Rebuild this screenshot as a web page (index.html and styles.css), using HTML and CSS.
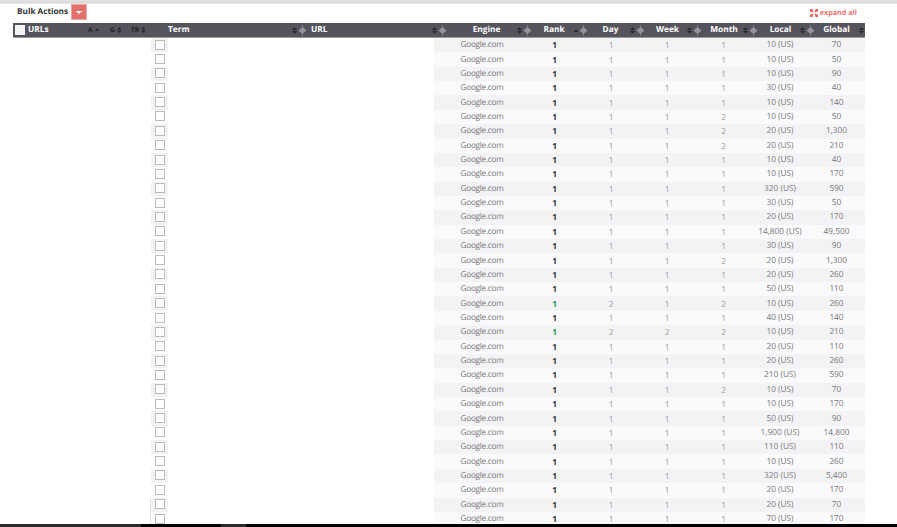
FILE: index.html
```html
<!DOCTYPE html>
<html lang="en">
<head>
<meta charset="utf-8">
<title>Bulk Actions</title>
<link rel="stylesheet" href="styles.css">
</head>
<body>
<svg class="defs" width="0" height="0" aria-hidden="true">
  <symbol id="sort" viewBox="0 0 6 8"><path d="M3 0 6 3.4H0ZM3 8 0 4.6H6Z"/></symbol>
  <symbol id="sep" viewBox="0 0 9 13"><path d="M4 1h1v11h-1z" opacity=".7"/><path d="M4.5 3 8.5 6.5 4.5 10 .5 6.5Z"/></symbol>
</svg>
<div class="page">
  <div class="topline"></div>
  <div class="toolbar">
    <span class="bulk">Bulk Actions</span>
    <button class="caret-btn" type="button" aria-label="Bulk actions menu"><span class="caret"></span></button>
    <a class="expand">
      <svg class="expand-icon" viewBox="0 0 8 8" width="8" height="8"><path d="M0 0h3L2.2 .8 3.6 2.6 2.6 3.6 .8 2.2 0 3ZM8 0v3L7.2 2.2 5.4 3.6 4.4 2.6 5.8 .8 5 0ZM0 8V5L.8 5.8 2.6 4.4 3.6 5.4 2.2 7.2 3 8ZM8 8H5L5.8 7.2 4.4 5.4 5.4 4.4 7.2 5.8 8 5Z"/></svg>
      expand all
    </a>
  </div>
  <div class="head">
    <div class="hcell urls">
      <span class="hbox"></span>
      <span class="urls-label">URLs</span>
      <span class="mini m-a">A<i class="up"></i></span>
      <span class="mini m-g">G<svg class="sort"><use href="#sort"/></svg></span>
      <span class="mini m-tr">TR<svg class="sort"><use href="#sort"/></svg></span>
    </div>
    <div class="hcell left term"><span class="label">Term</span><svg class="sort"><use href="#sort"/></svg></div>
    <div class="hcell left url"><svg class="sep"><use href="#sep"/></svg><span class="label">URL</span><svg class="sort"><use href="#sort"/></svg></div>
    <div class="hcell engine"><svg class="sep"><use href="#sep"/></svg><span class="label">Engine</span><svg class="sort"><use href="#sort"/></svg></div>
    <div class="hcell"><svg class="sep"><use href="#sep"/></svg><span class="label">Rank</span><i class="up"></i></div>
    <div class="hcell"><svg class="sep"><use href="#sep"/></svg><span class="label">Day</span><svg class="sort"><use href="#sort"/></svg></div>
    <div class="hcell"><svg class="sep"><use href="#sep"/></svg><span class="label">Week</span><svg class="sort"><use href="#sort"/></svg></div>
    <div class="hcell"><svg class="sep"><use href="#sep"/></svg><span class="label">Month</span><svg class="sort"><use href="#sort"/></svg></div>
    <div class="hcell"><svg class="sep"><use href="#sep"/></svg><span class="label">Local</span><svg class="sort"><use href="#sort"/></svg></div>
    <div class="hcell global"><svg class="sep"><use href="#sep"/></svg><span class="label">Global</span><svg class="sort"><use href="#sort"/></svg></div>
  </div>
  <div class="body" id="rows"></div>
  <div class="footer"><span class="f1"></span><span class="f2"></span><span class="f3"></span><span class="f4"></span></div>
</div>
<script src="rows.js"></script>
</body>
</html>
```
FILE: rows.js
```js
var data = [
  [1,1,1,"10",70],[1,1,1,"10",50],[1,1,1,"10",90],[1,1,1,"30",40],[1,1,1,"10",140],
  [1,1,2,"10",50],[1,1,2,"20","1,300"],[1,1,2,"20",210],[1,1,1,"10",40],[1,1,1,"10",170],
  [1,1,1,"320",590],[1,1,1,"30",50],[1,1,1,"20",170],[1,1,1,"14,800","49,500"],[1,1,1,"30",90],
  [1,1,2,"20","1,300"],[1,1,1,"20",260],[1,1,1,"50",110],[2,1,2,"10",260],[1,1,1,"40",140],
  [2,2,2,"10",210],[1,1,1,"20",110],[1,1,1,"20",260],[1,1,1,"210",590],[1,1,2,"10",70],
  [1,1,1,"10",170],[1,1,1,"50",90],[1,1,1,"1,900","14,800"],[1,1,1,"110",110],[1,1,1,"10",260],
  [1,1,1,"320","5,400"],[1,1,1,"20",170],[1,1,1,"20",70],[1,1,1,"70",170]
];
document.getElementById("rows").innerHTML = data.map(function (r, i) {
  var up = r[0] === 2;
  return '<div class="row' + (i > 31 ? ' edge' : '') + '">' +
    '<span class="blank"></span>' +
    '<span class="check"><span class="box"></span></span>' +
    '<span class="blank"></span>' +
    '<span class="cell eng">Google.com</span>' +
    '<span class="cell rank' + (up ? ' green' : '') + '">1</span>' +
    '<span class="cell num">' + r[0] + '</span>' +
    '<span class="cell num">' + r[1] + '</span>' +
    '<span class="cell num">' + r[2] + '</span>' +
    '<span class="cell">' + r[3] + ' (US)</span>' +
    '<span class="cell">' + r[4] + '</span>' +
    '</div>';
}).join("");
```
FILE: styles.css
```css
* { box-sizing: border-box; }
html, body { margin: 0; height: 100%; overflow: hidden; background: #fff; }
body { font-family: "Open Sans", "Liberation Sans", sans-serif; font-size: 8.3px; color: #777; text-rendering: geometricPrecision; }
.defs { display: block; height: 0; }
.page { width: 897px; height: 527px; display: flex; flex-direction: column; overflow: hidden; opacity: .999; }
.topline { height: 4px; flex: none; background: linear-gradient(#e4e4e4, #d8d8d8 70%, #f2f2f2); }

.toolbar { height: 19px; flex: none; width: 865px; display: flex; align-items: flex-start; padding-left: 17px; }
.bulk { font-weight: 700; font-size: 8.2px; color: #333; width: 54px; line-height: 16px; }
.caret-btn { width: 16px; height: 16px; padding: 0; margin: 0; border: 1px solid #eda5a2; background: #e2706d; display: flex; align-items: center; justify-content: center; }
.caret { width: 0; height: 0; border-left: 3px solid transparent; border-right: 3px solid transparent; border-top: 3px solid #fff; }
.expand { margin-left: auto; margin-right: 8px; margin-top: 4px; display: flex; align-items: center; gap: 2px; font-weight: 700; font-size: 7.2px; color: #ef7373; }
.expand-icon { fill: #ee5a5a; }

.head { height: 15px; flex: none; width: 852px; margin-left: 13px; background: #55545c; border-bottom: 1px solid #9a9a9f; display: grid; grid-template-columns: 138px 147px 140px 85px 56px 57px 57px 56px 57px 59px; color: #fff; font-weight: 700; font-size: 8.3px; }
.hcell { display: flex; align-items: center; min-width: 0; }
.label { flex: 1; text-align: center; padding-left: 3px; padding-bottom: 1px; }
.left .label { text-align: left; }
.term { padding-left: 17px; }
.term .label { padding-left: 0; }
.url .label { padding-left: 4px; }
.engine .label { padding-left: 9px; }
.global .label { padding-left: 0; padding-right: 1px; }
.sort { width: 5px; height: 7px; fill: #25252b; flex: none; margin-right: 1px; }
.sep { width: 9px; height: 13px; flex: none; fill: #93939a; }
.up { width: 0; height: 0; flex: none; margin-right: 1px; border-left: 2.5px solid transparent; border-right: 2.5px solid transparent; border-bottom: 3px solid #25252b; margin-left: 1px; }
.urls { padding-left: 2px; }
.hbox { width: 10px; height: 10px; background: #f4f4f4; flex: none; }
.urls-label { margin-left: 3px; width: 60px; padding-bottom: 1px; }
.mini { font-size: 6.6px; color: #1f1f25; display: flex; align-items: center; gap: 1px; padding-bottom: 1px; }
.mini .sort { margin: 0 0 0 1px; width: 5px; height: 6px; }
.m-a { width: 22px; }
.m-g { width: 21px; }
.m-tr { width: 20px; }

.body { flex: 1; min-height: 0; overflow: hidden; }
.row { height: 14.36px; width: 865px; display: grid; grid-template-columns: 151px 17px 266px 92px 57px 56px 56px 57px 56px 57px; align-items: stretch; }
.cell { display: flex; align-items: center; justify-content: center; padding-bottom: 1px; background: #fafafc; }
.row:nth-child(odd) .cell, .row:nth-child(odd) .check { background: #f3f3f5; }
.check { display: flex; align-items: center; justify-content: center; background: #fff; }
.box { width: 10px; height: 10px; border: 1px solid #bbb; background: #fff; margin-bottom: 1px; }
.eng { padding-left: 4px; font-size: 8.2px; letter-spacing: -.25px; }
.num { color: #999; padding-top: 1px; padding-bottom: 0; }
.rank { color: #333; font-weight: 700; padding-top: 1px; padding-bottom: 0; }
.green { color: #1aa04c; }
.edge .check { box-shadow: -1px 0 0 #e2e2e2; }

.footer { height: 3px; flex: none; display: flex; background: #000; }
.f1 { width: 141px; background: #2b2b2b; }
.f2 { width: 80px; background: #000; }
.f3 { width: 25px; background: #2b2b2b; }
.f4 { flex: 1; background: #000; }
```
